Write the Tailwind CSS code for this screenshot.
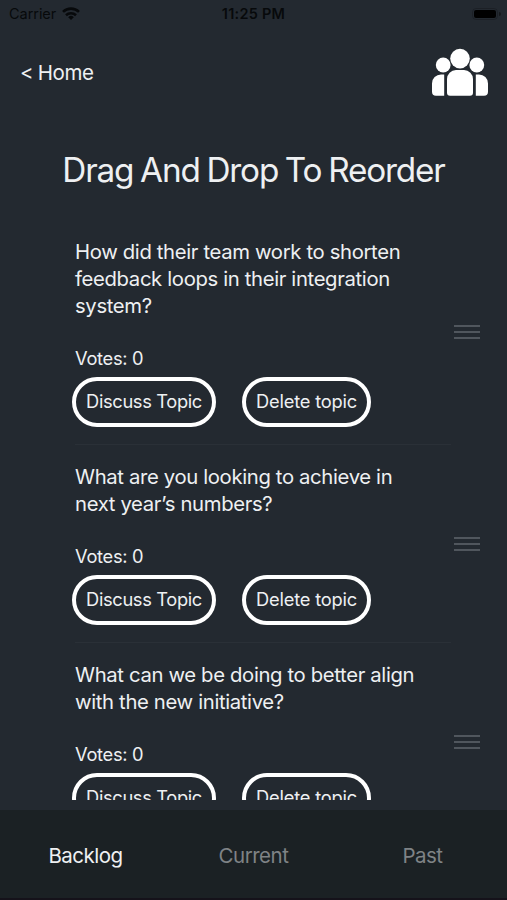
<!DOCTYPE html>
<html lang="en">
<head>
    <meta charset="UTF-8">
    <meta name="viewport" content="width=device-width, initial-scale=1.0">
    <title>Backlog</title>
    <script src="https://cdn.jsdelivr.net/npm/@tailwindcss/browser@4"></script>
</head>
<body class="bg-[#232930] font-['Inter','Liberation_Sans',sans-serif] text-[#eef0f2]">
    <div class="flex flex-col w-[507px] h-[900px] overflow-hidden">
        <!-- Status bar -->
        <div class="grid grid-cols-3 items-center h-7 shrink-0 text-[#07090b] text-[14.5px] leading-7">
            <div class="flex items-center gap-[6px] pl-[9px]">
                <span class="tracking-[-0.05px]">Carrier</span>
                <svg class="w-[18px] h-[13px] -mt-[2px]" viewBox="0 0 18 13" fill="none" stroke="currentColor" stroke-width="2.6">
                    <path d="M1 4.9a11.4 11.4 0 0 1 16 0" />
                    <path d="M4 8.2a7.2 7.2 0 0 1 10 0" />
                    <path d="M9 13L6.2 10.2a4 4 0 0 1 5.6 0z" fill="currentColor" stroke="none" />
                </svg>
            </div>
            <div class="text-center font-semibold tracking-[0.25px] whitespace-nowrap">11:25 PM</div>
            <div class="flex items-center justify-end gap-px pr-[6px] -mt-px">
                <div class="w-[26px] h-3 rounded-[4px] border border-black/20 p-px">
                    <div class="h-full rounded-[2px] bg-black"></div>
                </div>
                <div class="w-[2px] h-1 rounded-r-full bg-black/40"></div>
            </div>
        </div>

        <!-- Header -->
        <header class="flex justify-between h-[104px] shrink-0 pl-5 pr-[19px] pt-[20px]">
            <a href="#" class="h-[50px] leading-[50px] text-[20.5px] tracking-[-0.4px] [word-spacing:-0.8px]">&lt; Home</a>
            <svg class="w-[56px] h-[49px]" viewBox="0 0 56 49" fill="white">
                <circle cx="28" cy="10.6" r="9.8" />
                <circle cx="11.2" cy="17" r="7.4" />
                <circle cx="44.8" cy="17" r="7.4" />
                <path d="M15 47.8V31a9 9 0 0 1 9-9h8a9 9 0 0 1 9 9V44.8a3 3 0 0 1-3 3H18a3 3 0 0 1-3-3z" />
                <path d="M12.2 26.4V47.8H4a4 4 0 0 1-4-4V35.4a9 9 0 0 1 9-9z" />
                <path d="M43.8 26.4V47.8H52a4 4 0 0 0 4-4V35.4a9 9 0 0 0-9-9z" />
            </svg>
        </header>

        <h1 class="h-[88px] shrink-0 pt-[18px] text-center text-[33.3px] leading-10 tracking-[-1.15px] [word-spacing:-1.5px] whitespace-nowrap">Drag And Drop To Reorder</h1>

        <!-- Topic list -->
        <main class="h-[580px] shrink-0 overflow-hidden pl-[75px]">
            <section class="flex h-[225px]">
                <div class="w-[376px] border-b border-[#2a3037] pt-[18px]">
                    <p class="text-[20.3px] leading-[27px] tracking-[-0.35px] whitespace-nowrap">How did their team work to shorten<br>feedback loops in their integration<br>system?</p>
                    <p class="mt-[27px] text-[18.3px] leading-[25px] tracking-[-0.3px]">Votes: 0</p>
                    <div class="mt-[6px] -ml-[3px] flex gap-[26px]">
                        <button class="w-[144px] h-[50px] rounded-full border-4 border-white text-[18.3px] tracking-[-0.35px] whitespace-nowrap">Discuss Topic</button>
                        <button class="w-[129px] h-[50px] rounded-full border-4 border-white text-[18.3px] tracking-[-0.2px] whitespace-nowrap">Delete topic</button>
                    </div>
                </div>
                <div class="flex flex-col justify-center gap-1 pl-[3px] pb-px">
                    <div class="w-[26px] h-[2px] bg-[#50565d]"></div>
                    <div class="w-[26px] h-[2px] bg-[#50565d]"></div>
                    <div class="w-[26px] h-[2px] bg-[#50565d]"></div>
                </div>
            </section>
            <section class="flex h-[198px]">
                <div class="w-[376px] border-b border-[#2a3037] pt-[18px]">
                    <p class="text-[20.3px] leading-[27px] tracking-[-0.35px] whitespace-nowrap">What are you looking to achieve in<br>next year’s numbers?</p>
                    <p class="mt-[27px] text-[18.3px] leading-[25px] tracking-[-0.3px]">Votes: 0</p>
                    <div class="mt-[6px] -ml-[3px] flex gap-[26px]">
                        <button class="w-[144px] h-[50px] rounded-full border-4 border-white text-[18.3px] tracking-[-0.35px] whitespace-nowrap">Discuss Topic</button>
                        <button class="w-[129px] h-[50px] rounded-full border-4 border-white text-[18.3px] tracking-[-0.2px] whitespace-nowrap">Delete topic</button>
                    </div>
                </div>
                <div class="flex flex-col justify-center gap-1 pl-[3px]">
                    <div class="w-[26px] h-[2px] bg-[#50565d]"></div>
                    <div class="w-[26px] h-[2px] bg-[#50565d]"></div>
                    <div class="w-[26px] h-[2px] bg-[#50565d]"></div>
                </div>
            </section>
            <section class="flex h-[198px]">
                <div class="w-[376px] border-b border-[#2a3037] pt-[18px]">
                    <p class="text-[20.3px] leading-[27px] tracking-[-0.35px] whitespace-nowrap">What can we be doing to better align<br>with the new initiative?</p>
                    <p class="mt-[27px] text-[18.3px] leading-[25px] tracking-[-0.3px]">Votes: 0</p>
                    <div class="mt-[6px] -ml-[3px] flex gap-[26px]">
                        <button class="w-[144px] h-[50px] rounded-full border-4 border-white text-[18.3px] tracking-[-0.35px] whitespace-nowrap">Discuss Topic</button>
                        <button class="w-[129px] h-[50px] rounded-full border-4 border-white text-[18.3px] tracking-[-0.2px] whitespace-nowrap">Delete topic</button>
                    </div>
                </div>
                <div class="flex flex-col justify-center gap-1 pl-[3px]">
                    <div class="w-[26px] h-[2px] bg-[#50565d]"></div>
                    <div class="w-[26px] h-[2px] bg-[#50565d]"></div>
                    <div class="w-[26px] h-[2px] bg-[#50565d]"></div>
                </div>
            </section>
        </main>

        <!-- Tab bar -->
        <nav class="mt-auto grid grid-cols-3 h-[90px] shrink-0 bg-[#1b2124] border-b-2 border-[#15121a] text-center text-[20.5px] leading-[92px] tracking-[-0.5px] text-[#7f8386]">
            <a href="#" class="pl-[2px] text-[#eef0f2]">Backlog</a>
            <a href="#">Current</a>
            <a href="#">Past</a>
        </nav>
    </div>
</body>
</html>
